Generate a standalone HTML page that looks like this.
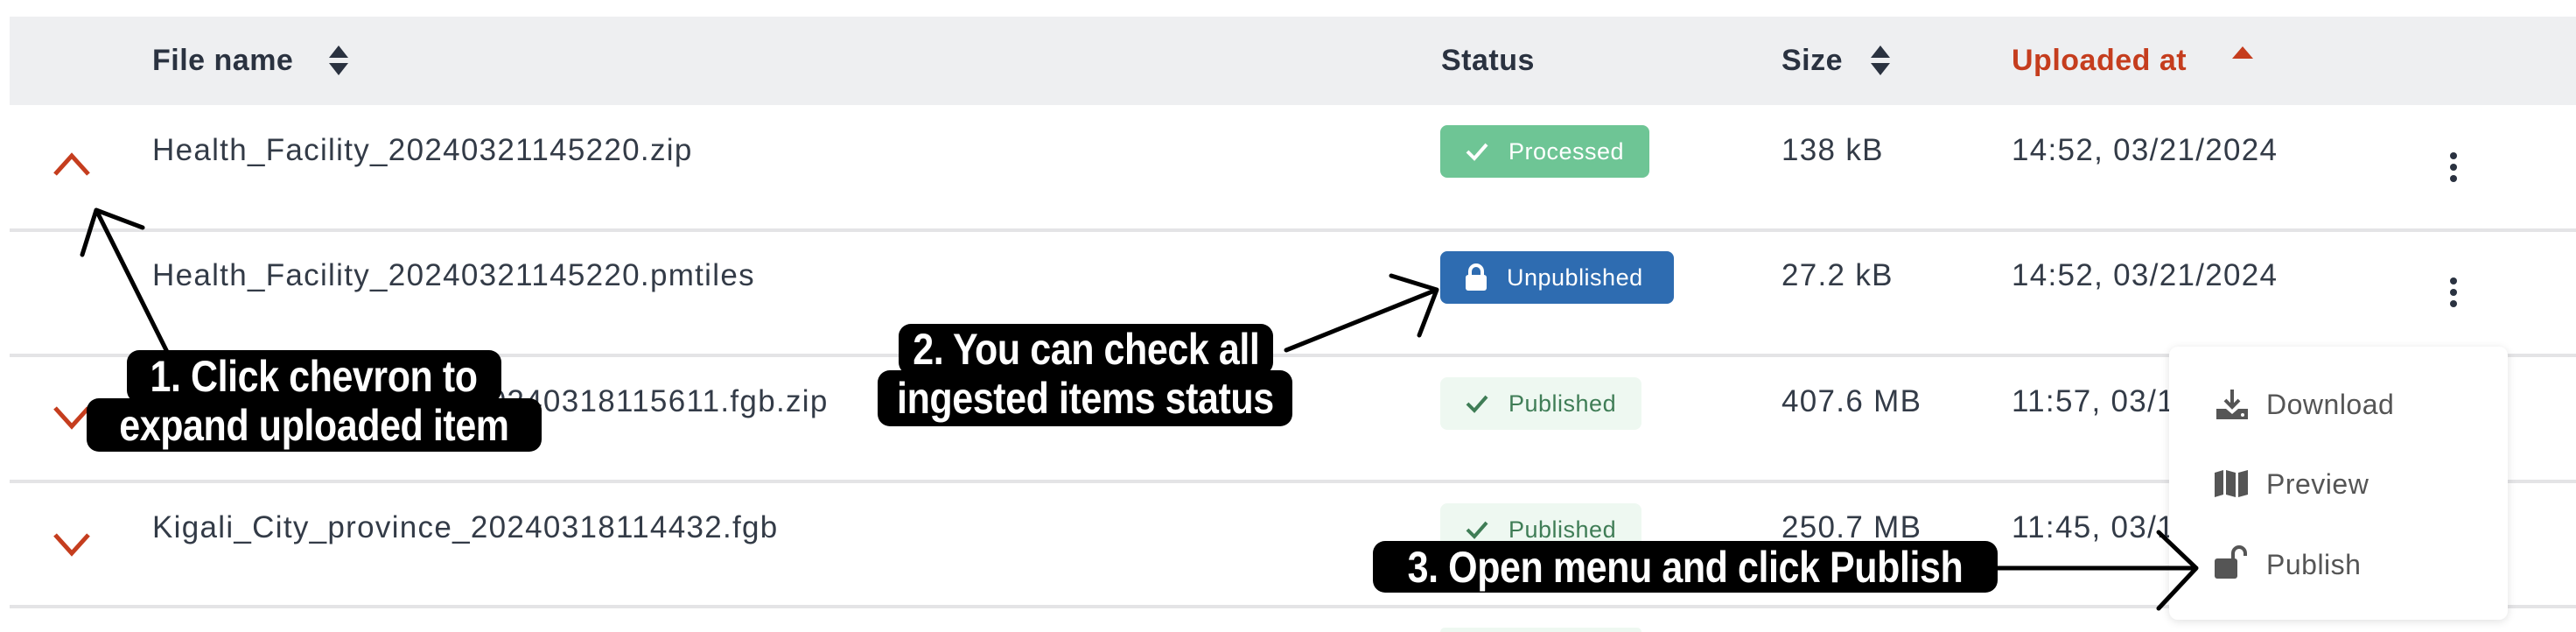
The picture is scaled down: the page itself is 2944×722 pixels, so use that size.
<!DOCTYPE html>
<html><head><meta charset="utf-8"><style>
*{margin:0;padding:0;box-sizing:border-box}
html,body{width:2944px;height:722px;overflow:hidden}
body{background:#fff;position:relative;font-family:"Liberation Sans",sans-serif;color:#2d3440}
.a{position:absolute}
.hdr{left:11px;top:19px;width:2933px;height:101px;background:#eeeff1}
.hl{font-size:34px;font-weight:bold;top:50px;color:#2a3240;letter-spacing:.5px}
.line{left:11px;width:2933px;height:4px;background:#e4e4e6}
.cell{font-size:35px;color:#333b47;letter-spacing:1.3px}
.badge{border-radius:8px;font-size:27px;display:flex;align-items:center;letter-spacing:.5px}
.lbl{background:#000;color:#fff;border-radius:14px;display:flex;align-items:center;justify-content:center;overflow:visible}
.lbl span{font-size:50px;font-weight:bold;white-space:nowrap;display:inline-block;transform:scaleX(.86);letter-spacing:-.5px}
.mi{font-size:32px;color:#555;letter-spacing:.5px}
</style></head><body>
<div class="a hdr"></div>
<div class="a hl" style="left:174px">File name</div>
<svg class="a" style="left:374px;top:50px" width="26" height="38" viewBox="0 0 26 38"><path d="M13 2 L24 16 H2Z M13 36 L24 22 H2Z" fill="#2a3240"/></svg>
<div class="a hl" style="left:1647px">Status</div>
<div class="a hl" style="left:2036px">Size</div>
<svg class="a" style="left:2136px;top:50px" width="26" height="38" viewBox="0 0 26 38"><path d="M13 2 L24 16 H2Z M13 36 L24 22 H2Z" fill="#2a3240"/></svg>
<div class="a hl" style="left:2299px;color:#c53d1e">Uploaded at</div>
<svg class="a" style="left:2550px;top:52px" width="26" height="16"><path d="M13 1 L25 15 H1Z" fill="#c53d1e"/></svg>

<div class="a line" style="top:261px"></div>
<div class="a line" style="top:404px"></div>
<div class="a line" style="top:548px"></div>
<div class="a line" style="top:691px"></div>

<svg class="a" style="left:58px;top:170px" width="48" height="34"><path d="M5 29 L24 8 L43 29" stroke="#c53d1e" stroke-width="5" fill="none"/></svg>
<svg class="a" style="left:58px;top:460px" width="48" height="34"><path d="M5 6 L24 27 L43 6" stroke="#c53d1e" stroke-width="5" fill="none"/></svg>
<svg class="a" style="left:58px;top:605px" width="48" height="34"><path d="M5 6 L24 27 L43 6" stroke="#c53d1e" stroke-width="5" fill="none"/></svg>

<div class="a cell" style="left:174px;top:152px">Health_Facility_20240321145220.zip</div>
<div class="a cell" style="left:174px;top:295px">Health_Facility_20240321145220.pmtiles</div>
<div class="a cell" style="left:174px;top:439px">Kigali_City_province_20240318115611.fgb.zip</div>
<div class="a cell" style="left:174px;top:583px">Kigali_City_province_20240318114432.fgb</div>

<div class="a badge" style="left:1646px;top:143px;width:239px;height:60px;background:#6ec595;color:#fff">
<svg style="margin-left:28px" width="28" height="22"><path d="M3 11 L11 19 L25 3" stroke="#fff" stroke-width="4" fill="none"/></svg><span style="margin-left:22px">Processed</span></div>
<div class="a badge" style="left:1646px;top:287px;width:267px;height:60px;background:#2e6cb1;color:#fff">
<svg style="margin-left:28px" width="26" height="32"><path d="M6 14 V9 a7 7 0 0 1 14 0 V14" stroke="#fff" stroke-width="4" fill="none"/><rect x="1" y="13" width="24" height="18" rx="3" fill="#fff"/></svg><span style="margin-left:22px">Unpublished</span></div>
<div class="a badge" style="left:1646px;top:431px;width:230px;height:60px;background:#eef8f1;color:#3f7d56">
<svg style="margin-left:28px" width="28" height="22"><path d="M3 11 L11 19 L25 3" stroke="#3f7d56" stroke-width="4" fill="none"/></svg><span style="margin-left:22px">Published</span></div>
<div class="a badge" style="left:1646px;top:575px;width:230px;height:60px;background:#eef8f1;color:#3f7d56">
<svg style="margin-left:28px" width="28" height="22"><path d="M3 11 L11 19 L25 3" stroke="#3f7d56" stroke-width="4" fill="none"/></svg><span style="margin-left:22px">Published</span></div>
<div class="a" style="left:1646px;top:717px;width:230px;height:5px;background:#eef8f1;border-radius:8px 8px 0 0"></div>

<div class="a cell" style="left:2036px;top:152px">138 kB</div>
<div class="a cell" style="left:2036px;top:295px">27.2 kB</div>
<div class="a cell" style="left:2036px;top:439px">407.6 MB</div>
<div class="a cell" style="left:2036px;top:583px">250.7 MB</div>
<div class="a cell" style="left:2299px;top:152px">14:52, 03/21/2024</div>
<div class="a cell" style="left:2299px;top:295px">14:52, 03/21/2024</div>
<div class="a cell" style="left:2299px;top:439px">11:57, 03/18/2024</div>
<div class="a cell" style="left:2299px;top:583px">11:45, 03/18/2024</div>

<svg class="a" style="left:2798px;top:173px" width="12" height="36"><circle cx="6" cy="5" r="4" fill="#2a3240"/><circle cx="6" cy="18" r="4" fill="#2a3240"/><circle cx="6" cy="31" r="4" fill="#2a3240"/></svg>
<svg class="a" style="left:2798px;top:316px" width="12" height="36"><circle cx="6" cy="5" r="4" fill="#2a3240"/><circle cx="6" cy="18" r="4" fill="#2a3240"/><circle cx="6" cy="31" r="4" fill="#2a3240"/></svg>

<div class="a" style="left:2479px;top:396px;width:387px;height:312px;background:#fff;border-radius:10px;box-shadow:0 2px 10px rgba(0,0,0,.12)"></div>
<svg class="a" style="left:2532px;top:443px" width="38" height="38" viewBox="0 0 38 38"><path d="M19 2 V22 M11 14 L19 22 L27 14" stroke="#555" stroke-width="4" fill="none"/><path d="M1 24 H12 L19 30 L26 24 H37 V36 H1Z" fill="#555"/><circle cx="31" cy="31" r="2" fill="#fff"/></svg>
<div class="a mi" style="left:2590px;top:444px">Download</div>
<svg class="a" style="left:2530px;top:536px" width="40" height="32" viewBox="0 0 40 32"><path d="M1 4 L11 1 V29 L1 32Z M14 1 L25 4 V32 L14 29Z M28 4 L39 1 V29 L28 32Z" fill="#555"/></svg>
<div class="a mi" style="left:2590px;top:535px">Preview</div>
<svg class="a" style="left:2530px;top:622px" width="42" height="40" viewBox="0 0 42 40"><rect x="1" y="16" width="26" height="23" rx="3" fill="#555"/><path d="M22 17 V10 a7 7 0 0 1 14 0 V13" stroke="#555" stroke-width="4" fill="none"/></svg>
<div class="a mi" style="left:2590px;top:627px">Publish</div>

<svg class="a" style="left:0;top:0" width="2944" height="722">
<g stroke="#000" stroke-width="5" fill="none" stroke-linecap="round">
<path d="M191 402 L110 240 M110 240 L163 260 M110 240 L94 291"/>
<path d="M1470 400 L1642 331 M1642 331 L1590 315 M1642 331 L1622 383"/>
<path d="M2283 649 L2510 649 M2510 649 L2467 608 M2510 649 L2467 695"/>
</g></svg>
<div class="a lbl" style="left:145px;top:400px;width:428px;height:60px"><span>1. Click chevron to</span></div>
<div class="a lbl" style="left:99px;top:455px;width:520px;height:61px"><span>expand uploaded item</span></div>
<div class="a lbl" style="left:1027px;top:370px;width:428px;height:58px"><span>2. You can check all</span></div>
<div class="a lbl" style="left:1003px;top:423px;width:474px;height:64px"><span>ingested items status</span></div>
<div class="a lbl" style="left:1569px;top:618px;width:714px;height:59px"><span>3. Open menu and click Publish</span></div>
</body></html>
